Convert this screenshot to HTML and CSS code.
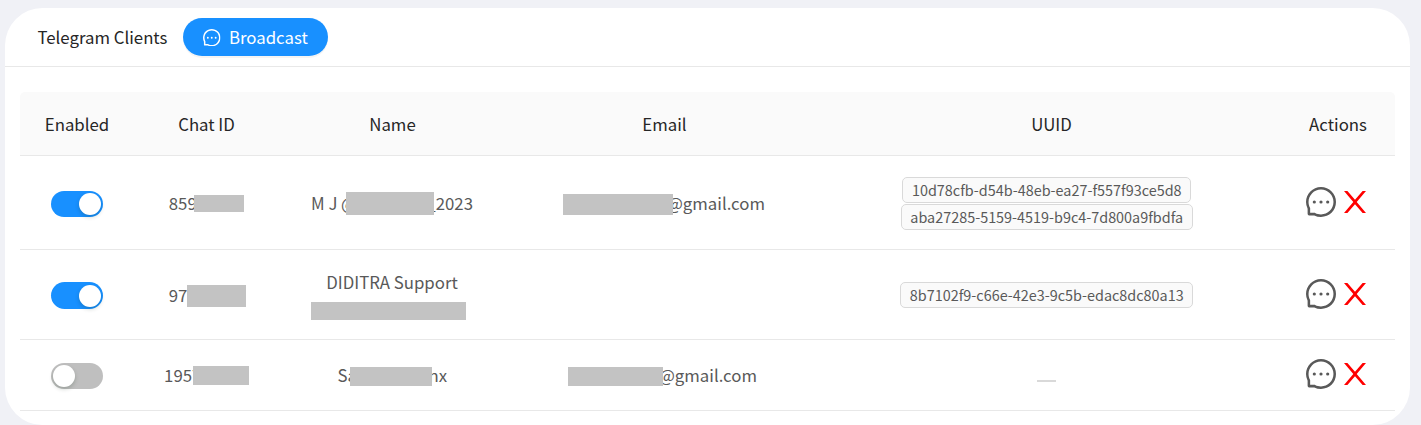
FILE: index.html
```
<!DOCTYPE html>
<html lang="en">
<head>
<meta charset="utf-8">
<title>Telegram Clients</title>
<link rel="stylesheet" href="styles.css">
</head>
<body>
<svg class="defs" aria-hidden="true">
  <symbol id="message" viewBox="64 64 896 896">
    <path d="M464 512a48 48 0 1096 0 48 48 0 10-96 0zm200 0a48 48 0 1096 0 48 48 0 10-96 0zm-400 0a48 48 0 1096 0 48 48 0 10-96 0zm661.2-173.6c-22.6-53.7-55-101.9-96.3-143.3a444.35 444.35 0 00-143.3-96.3C630.6 75.7 572.2 64 512 64h-2c-60.6.3-119.3 12.3-174.5 35.9a445.35 445.35 0 00-142 96.5c-40.9 41.3-73 89.3-95.2 142.8-23 55.4-34.6 114.3-34.3 174.9A449.4 449.4 0 00112 714v152a46 46 0 0046 46h152.1A449.4 449.4 0 00510 960h2.1c59.9 0 118-11.6 172.7-34.3a444.48 444.48 0 00142.8-95.2c41.3-40.9 73.8-88.7 96.5-142 23.6-55.2 35.6-113.9 35.9-174.5.3-60.9-11.5-120-34.8-175.6zm-151.1 438C704 845.8 611 884 512 884h-1.7c-60.3-.3-120.2-15.3-173.1-43.5l-8.4-4.5H188V695.2l-4.5-8.4C155.3 633.9 140.3 574 140 513.7c-.4-99.7 37.7-193.3 107.6-263.8 69.8-70.5 163.1-109.5 262.8-109.9h1.7c50 0 98.5 9.7 144.2 28.9 44.6 18.7 84.6 45.6 119 80 34.3 34.3 61.3 74.4 80 119 19.4 46.2 29.1 95.2 28.9 145.8-.6 99.6-39.7 192.9-110.1 262.7z"/>
  </symbol>
  <symbol id="close" viewBox="0 0 22 22">
    <path d="M0 0H3.4L11 8.8L18.6 0H22L12.7 11L22 22H18.6L11 13.2L3.4 22H0L9.3 11Z"/>
  </symbol>
</svg>
<main class="card">
  <header class="card-head">
    <h1 class="title">Telegram Clients</h1>
    <button class="broadcast"><svg class="btn-icon"><use href="#message"/></svg><span class="btn-label">Broadcast</span></button>
  </header>
  <section class="table">
    <div class="row head">
      <div>Enabled</div><div>Chat ID</div><div>Name</div><div>Email</div><div>UUID</div><div class="head-actions">Actions</div>
    </div>
    <div class="row first">
      <div><span class="switch on"></span></div>
      <div><span class="value id-a"><span>859</span><i class="mask"></i></span></div>
      <div><span class="value name-a"><span>M J @</span><i class="mask"></i><span>_2023</span></span></div>
      <div><span class="value mail-a"><i class="mask"></i><span>@gmail.com</span></span></div>
      <div class="tags"><span class="tag">10d78cfb-d54b-48eb-ea27-f557f93ce5d8</span><span class="tag">aba27285-5159-4519-b9c4-7d800a9fbdfa</span></div>
      <div class="actions"><svg class="msg"><use href="#message"/></svg><svg class="del"><use href="#close"/></svg></div>
    </div>
    <div class="row second">
      <div><span class="switch on"></span></div>
      <div><span class="value id-b"><span>97</span><i class="mask"></i></span></div>
      <div class="stack"><span>DIDITRA Support</span><i class="block"></i></div>
      <div></div>
      <div class="tags"><span class="tag">8b7102f9-c66e-42e3-9c5b-edac8dc80a13</span></div>
      <div class="actions"><svg class="msg"><use href="#message"/></svg><svg class="del"><use href="#close"/></svg></div>
    </div>
    <div class="row third">
      <div><span class="switch"></span></div>
      <div><span class="value id-c"><span>1957</span><i class="mask"></i></span></div>
      <div><span class="value name-c"><span>Sa</span><i class="mask"></i><span>nx</span></span></div>
      <div class="mail-cell"><span class="value mail-c"><i class="mask"></i><span>@gmail.com</span></span></div>
      <div class="tags"><span class="tag-empty"></span></div>
      <div class="actions"><svg class="msg"><use href="#message"/></svg><svg class="del"><use href="#close"/></svg></div>
    </div>
  </section>
</main>
</body>
</html>
```
FILE: styles.css
```
* { box-sizing: border-box; }
body {
  margin: 0;
  padding: 8px 11px 0 5px;
  height: 425px;
  overflow: hidden;
  background: #f0f1f6;
  color: #595959;
  font: 16.8px/28px "Noto Sans CJK SC", "Noto Sans", sans-serif;
}
.defs { display: none; }
.card {
  height: 417px;
  background: #fff;
  border-radius: 37.5px;
  overflow: hidden;
}
.card-head {
  display: flex;
  align-items: center;
  gap: 15px;
  height: 59px;
  padding-left: 32.5px;
  border-bottom: 1px solid #e8e8e8;
}
.title {
  width: 130.5px;
  margin: 0;
  padding-bottom: 1px;
  color: #262626;
  font-size: 16.8px;
  font-weight: 400;
  white-space: nowrap;
}
.broadcast {
  display: flex;
  align-items: center;
  gap: 8.5px;
  width: 145px;
  height: 38px;
  padding: 1px 0 0 20px;
  border: 0;
  border-radius: 19px;
  background: #1890ff;
  box-shadow: 0 2px 0 rgba(0, 0, 0, 0.045);
  color: #fff;
  font: inherit;
}
.btn-icon { width: 17.5px; height: 17.5px; fill: currentColor; }
.btn-label { padding-bottom: 2px; }
.table { padding: 25px 15px 0; }
.row {
  display: grid;
  grid-template-columns: 113px 146px 226px 318px 456px 116px;
  border-bottom: 1px solid #e8e8e8;
}
.row > div {
  display: flex;
  align-items: center;
  justify-content: center;
}
.head {
  height: 64px;
  padding: 1px 0 0 0.5px;
  border-radius: 5px 5px 0 0;
  background: #fafafa;
  color: #262626;
}
.head > .head-actions { padding-left: 1px; }
.first { height: 94px; }
.second { height: 90px; }
.third { height: 71px; }
.switch {
  width: 52px;
  height: 26px;
  margin-top: 2px;
  padding: 2px;
  border-radius: 14px;
  background: #bfbfbf;
}
.second .switch { height: 27px; padding-top: 3px; }
.switch::before {
  content: "";
  display: block;
  width: 22px;
  height: 22px;
  border-radius: 50%;
  background: #fff;
  box-shadow: 0 2px 4px rgba(0, 35, 11, 0.2);
}
.switch.on { background: #1890ff; }
.switch.on::before { margin-left: auto; }
.value {
  position: relative;
  display: flex;
  justify-content: space-between;
  height: 28px;
  white-space: nowrap;
}
.mask {
  position: absolute;
  background: #c3c3c3;
}
.id-a { width: 75px; padding-left: 0.3px; }
.id-a .mask { left: 25px; top: 6px; width: 50px; height: 17px; }
.id-b { width: 77px; margin-left: 2px; padding-left: 0.3px; }
.id-b .mask { left: 18px; top: 4px; width: 59px; height: 22px; }
.id-c { width: 85px; padding-left: 0.6px; }
.id-c .mask { left: 29px; top: 5px; width: 56px; height: 19px; }
.name-a { width: 162px; }
.name-a .mask { left: 35px; top: 3px; width: 88px; height: 23px; }
.name-c { width: 110px; padding-left: 0.5px; }
.name-c .mask { left: 13px; top: 6px; width: 82px; height: 19px; }
.mail-a, .mail-c { justify-content: flex-end; }
.mail-a { width: 202px; }
.mail-a .mask { left: 0; top: 5px; width: 110px; height: 21px; z-index: 1; }
.row > .mail-cell { padding-right: 3px; }
.mail-c { width: 189px; }
.mail-c .mask { left: 0; top: 6px; width: 95px; height: 19px; z-index: 1; }
.row > .stack { flex-direction: column; gap: 6px; padding-bottom: 1px; }
.block {
  width: 155px;
  height: 18px;
  margin-right: 7px;
  background: #c3c3c3;
}
.row > .tags {
  flex-direction: column;
  gap: 1px;
  padding-right: 8.5px;
}
.first > .tags { padding-top: 2px; }
.tag {
  height: 26px;
  padding: 0 8.6px;
  border: 1px solid #d9d9d9;
  border-radius: 5px;
  background: #fafafa;
  font-size: 14.4px;
  line-height: 23px;
}
.tag-empty { width: 19px; height: 2px; margin-top: 12px; background: #d9d9d9; }
.row > .actions { gap: 8px; padding: 0 2px 2px 0; }
.msg { width: 30px; height: 30px; fill: #595959; }
.del { width: 22px; height: 22px; fill: #f00; }
```
